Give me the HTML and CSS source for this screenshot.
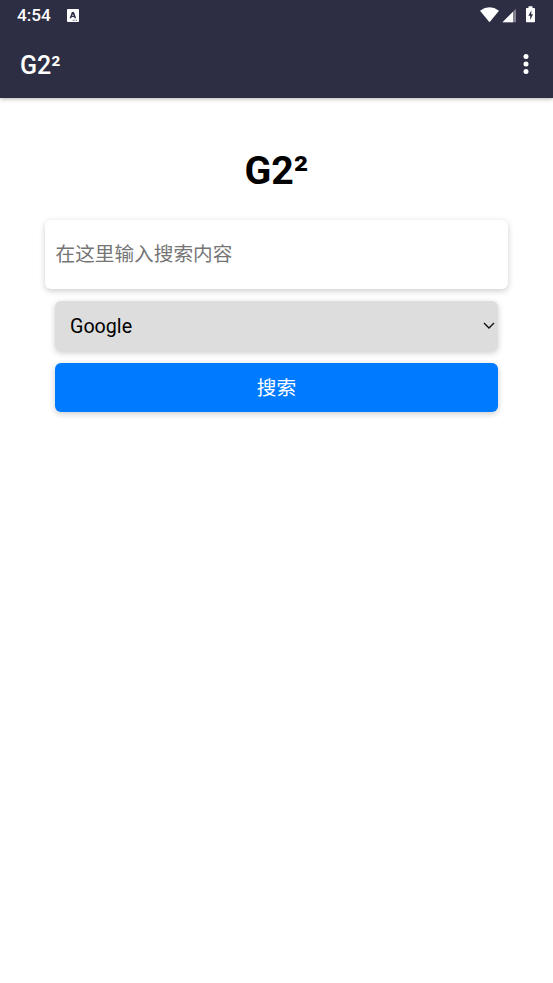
FILE: index.html
```html
<!DOCTYPE html>
<html lang="zh-CN">
<head>
<meta charset="utf-8">
<title>G2²</title>
<link rel="stylesheet" href="styles.css">
</head>
<body>
<header class="top">
  <div class="status">
    <span class="time">4:54</span>
    <svg class="note" width="12" height="13" viewBox="0 0 12 13"><rect width="12" height="13" rx="1" fill="#fff"/><path fill="#2d2e43" fill-rule="evenodd" d="M4.9 3h2L9.2 9.3H7.5L7.1 8.1H4.7L4.3 9.3H2.6ZM5.9 4.9 5.2 6.9h1.4Z"/><path d="M5.8 11.3h1.8M8.6 11.3h1.4" stroke="#2d2e43" stroke-width=".7"/></svg>
    <svg class="signals" width="56" height="18" viewBox="0 0 56 18">
      <path d="M0 4.8Q9.5-2.1 19 4.8L9.5 16.2Z" fill="#fff"/>
      <path d="M36 2.7V16.2H22.5Z" fill="#81828e"/>
      <path d="M33 5.7V16.2H22.5Z" fill="#fff"/>
      <path d="M48.5 .3h4v1.7h1.7q.8 0 .8.8v12.6q0 .8-.8.8h-7.4q-.8 0-.8-.8V2.8q0-.8.8-.8h1.7Z" fill="#fff"/>
      <path d="M51.5 4.2 48.3 9.8h1.9v4.3L53 8.3h-1.8Z" fill="#2d2e43"/>
    </svg>
  </div>
  <div class="bar">
    <span class="name">G2²</span>
    <svg class="more" width="6" height="20" viewBox="0 0 6 20" fill="#fff"><circle cx="3" cy="2.6" r="2.5"/><circle cx="3" cy="10" r="2.5"/><circle cx="3" cy="17.4" r="2.5"/></svg>
  </div>
</header>
<main class="page">
  <h1 class="title">G2²</h1>
  <input class="query" type="text" placeholder="在这里输入搜索内容">
  <div class="engine"><span>Google</span><svg width="12" height="8" viewBox="0 0 12 8"><path d="M1 1 6 6 11 1" fill="none" stroke="#111" stroke-width="1.4"/></svg></div>
  <button class="go">搜索</button>
</main>
</body>
</html>
```
FILE: styles.css
```css
* { box-sizing: border-box; }
body {
  margin: 0;
  min-height: 983px;
  background: #fff;
  font-family: Roboto, "Noto Sans CJK SC", sans-serif;
}
.top {
  height: 98px;
  background: #2d2e43;
  color: #fff;
  box-shadow: 0 1px 4px rgba(0, 0, 0, .3);
}
.status {
  height: 30px;
  padding: 0 17px;
  display: flex;
  align-items: center;
}
.time { font-size: 17.2px; font-weight: 500; line-height: 20px; }
.note { margin-left: 16px; }
.signals { margin-left: auto; }
.bar {
  height: 68px;
  padding: 0 24px 0 20px;
  display: flex;
  align-items: center;
  justify-content: space-between;
}
.name { font-size: 25px; font-weight: 500; line-height: 30px; margin-top: 4px; }
.page {
  display: flex;
  flex-direction: column;
  padding: 0 55px;
}
.title {
  margin: 50px 0 26px;
  font-size: 39.3px;
  font-weight: 700;
  line-height: 46px;
  text-align: center;
}
.query {
  height: 69px;
  margin: 0 -10px 12px;
  padding: 0 10px 0 10.5px;
  border: 0;
  border-radius: 6px;
  background: #fff;
  font: 19.66px Roboto, "Noto Sans CJK SC", sans-serif;
  box-shadow: 0 2px 6px rgba(0, 0, 0, .2);
}
.query::placeholder { color: #757575; }
.engine {
  height: 50px;
  margin-bottom: 11.6px;
  padding: 0 3px 0 15px;
  display: flex;
  align-items: center;
  justify-content: space-between;
  border-radius: 6px;
  background: #ddd;
  color: #000;
  font-size: 19.66px;
  box-shadow: 0 2px 6px rgba(0, 0, 0, .2);
}
.go {
  height: 49px;
  padding: 0 0 1px;
  border: 0;
  border-radius: 6px;
  background: #007bff;
  color: #fff;
  font: 19.66px Roboto, "Noto Sans CJK SC", sans-serif;
  box-shadow: 0 2px 6px rgba(0, 0, 0, .2);
}
```
